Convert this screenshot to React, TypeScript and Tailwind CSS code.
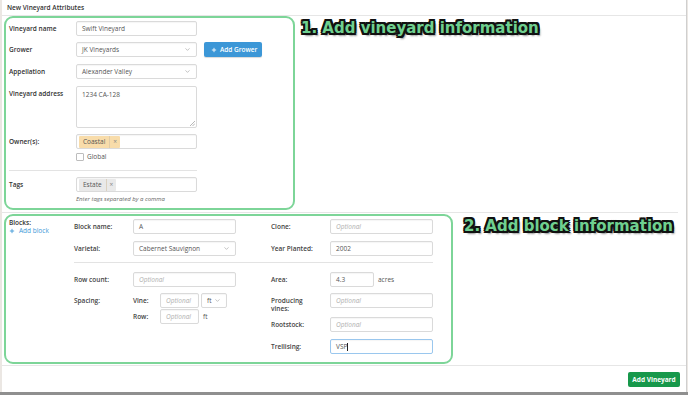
import React from 'react';
import { ChevronDown, Plus } from 'lucide-react';

function Field({ children, className = '' }: { children?: React.ReactNode; className?: string }) {
  return (
    <div
      className={`h-[15px] rounded-[2px] border border-[#dadada] bg-white flex items-center text-[6.5px] text-[#555] shadow-[inset_0_1px_1px_rgba(0,0,0,0.04)] ${className}`}
    >
      {children}
    </div>
  );
}

function Select({ value, className = '' }: { value: string; className?: string }) {
  return (
    <Field className={`justify-between pl-[5px] pr-[5px] ${className}`}>
      <span>{value}</span>
      <ChevronDown size={7} strokeWidth={1.5} className="text-[#777]" />
    </Field>
  );
}

function Optional() {
  return <span className="italic text-[#b0b0b0]">Optional</span>;
}

function Tag({ text, tone }: { text: string; tone: 'orange' | 'gray' }) {
  const bg = tone === 'orange' ? 'bg-[#f8dcaa]' : 'bg-[#e9e9e9]';
  return (
    <div className={`h-[12px] ${bg} rounded-[1px] flex items-center text-[6.5px] text-[#555]`}>
      <span className="px-[4px]">{text}</span>
      <span className="h-full w-px bg-[#d2c2a5] opacity-60" />
      <span className="px-[3px] text-[#888]">×</span>
    </div>
  );
}

function Row({ label, children, className = '', top = false }: { label: string; children: React.ReactNode; className?: string; top?: boolean }) {
  return (
    <div className={`flex ${top ? 'items-start' : 'items-center'} ${className}`}>
      <div className="w-[67px] shrink-0 font-semibold text-[#333] text-[6.5px] leading-[15px]">{label}</div>
      {children}
    </div>
  );
}

function BRow({ label, children, className = '' }: { label: React.ReactNode; children: React.ReactNode; className?: string }) {
  return (
    <div className={`flex items-center ${className}`}>
      <div className="w-[59px] shrink-0 font-semibold text-[#444] text-[6.5px] leading-[15px]">{label}</div>
      {children}
    </div>
  );
}

// thick black outline round the green annotation text
const outline =
  '[text-shadow:-1.8px_-1.8px_0_#111,1.8px_-1.8px_0_#111,-1.8px_1.8px_0_#111,1.8px_1.8px_0_#111,0_-2px_0_#111,0_2px_0_#111,-2px_0_0_#111,2px_0_0_#111,2.5px_2.5px_2px_rgba(0,0,0,0.45)]';

export default function App() {
  return (
    <div className="w-[688px] h-[395px] bg-[#ebe7e3] flex flex-col overflow-hidden font-['Open_Sans',sans-serif]">
      <div className="ml-[2px] w-[685px] h-[392px] bg-white border-r border-[#cfcfcf] flex flex-col">
        {/* header */}
        <div className="h-[16px] border-b border-[#e6e6e6] pl-[5px] flex items-center text-[6.5px] font-semibold text-[#333]">
          New Vineyard Attributes
        </div>

        {/* vineyard section */}
        <div className="flex pl-[2px]">
          <div className="w-[291px] h-[194px] shrink-0 rounded-[9px] border-2 border-[#7dd598] pl-[3px] pt-[3px] flex flex-col">
            <Row label="Vineyard name">
              <Field className="w-[121px] px-[5px]">Swift Vineyard</Field>
            </Row>
            <Row label="Grower" className="mt-[6px]">
              <Select value="JK Vineyards" className="w-[121px]" />
              <button className="ml-[7px] h-[15px] w-[58px] rounded-[2px] bg-[#3c97d7] text-white text-[6.5px] font-semibold flex items-center pl-[7px] gap-[3px] shadow-[0_1px_1px_rgba(0,0,0,0.15)]">
                <Plus size={6} strokeWidth={3.5} />
                Add Grower
              </button>
            </Row>
            <Row label="Appellation" className="mt-[7px]">
              <Select value="Alexander Valley" className="w-[121px]" />
            </Row>
            <Row label="Vineyard address" className="mt-[7px]" top>
              <div className="relative w-[121px] h-[42px] rounded-[2px] border border-[#dadada] px-[5px] pt-[3px] text-[6.5px] text-[#555]">
                1234 CA-128
                <svg className="absolute right-[1px] bottom-[1px]" width="5" height="5" viewBox="0 0 5 5">
                  <path d="M5 0 L0 5 M5 2.5 L2.5 5" stroke="#999" strokeWidth="0.7" />
                </svg>
              </div>
            </Row>
            <Row label="Owner(s):" className="mt-[6px]">
              <Field className="w-[121px] px-[2px]">
                <Tag text="Coastal" tone="orange" />
              </Field>
            </Row>
            <div className="mt-[4px] ml-[67px] flex items-center gap-[3px] text-[6.5px] text-[#555]">
              <span className="w-[8px] h-[8px] rounded-[1px] border border-[#bdbdbd] bg-white" />
              <span className="leading-[8px]">Global</span>
            </div>
            <div className="mt-[9px] w-[188px] h-px bg-[#e3e3e3]" />
            <Row label="Tags" className="mt-[6px]">
              <Field className="w-[121px] px-[2px]">
                <Tag text="Estate" tone="gray" />
              </Field>
            </Row>
            <div className="mt-[3px] ml-[67px] italic text-[6px] leading-[9px] text-[#666]">
              Enter tags separated by a comma
            </div>
          </div>
          <div className={`ml-[6px] mt-[3px] font-['DejaVu_Sans',sans-serif] font-bold text-[15px] leading-[18px] text-[#6fd08f] ${outline}`}>
            1. Add vineyard information
          </div>
        </div>

        <div className="mt-[2px] mr-[8px] h-px bg-[#e6e6e6]" />

        {/* block section */}
        <div className="flex pl-[2px] mt-[1px]">
          <div className="w-[449px] h-[150px] shrink-0 rounded-[9px] border-2 border-[#7dd598] pl-[3px] pt-[3px] flex">
            <div className="w-[65px] shrink-0 text-[6.5px] leading-[8px]">
              <div className="font-semibold text-[#333]">Blocks:</div>
              <div className="flex items-center gap-[4px] text-[#3c97d7]">
                <Plus size={6} strokeWidth={3.5} />
                Add block
              </div>
            </div>
            <div className="flex flex-col">
              <div className="flex gap-[35px]">
                <div className="w-[162px] flex flex-col gap-[7px]">
                  <BRow label="Block name:">
                    <Field className="w-[103px] px-[5px]">A</Field>
                  </BRow>
                  <BRow label="Varietal:">
                    <Select value="Cabernet Sauvignon" className="w-[103px]" />
                  </BRow>
                </div>
                <div className="w-[162px] flex flex-col gap-[7px]">
                  <BRow label="Clone:">
                    <Field className="w-[103px] px-[5px]"><Optional /></Field>
                  </BRow>
                  <BRow label="Year Planted:">
                    <Field className="w-[103px] px-[5px]">2002</Field>
                  </BRow>
                </div>
              </div>
              <div className="mt-[6px] w-[359px] h-px bg-[#e3e3e3]" />
              <div className="mt-[9px] flex gap-[35px]">
                <div className="w-[162px] flex flex-col">
                  <BRow label="Row count:">
                    <Field className="w-[103px] px-[5px]"><Optional /></Field>
                  </BRow>
                  <div className="mt-[6px] flex items-start">
                    <div className="w-[59px] shrink-0 font-semibold text-[#444] text-[6.5px] leading-[15px]">Spacing:</div>
                    <div className="flex flex-col gap-[1px]">
                      <div className="flex items-center">
                        <div className="w-[27px] font-semibold text-[#444] text-[6.5px]">Vine:</div>
                        <Field className="w-[39px] px-[5px]"><Optional /></Field>
                        <Select value="ft" className="ml-[2px] w-[26px]" />
                      </div>
                      <div className="flex items-center">
                        <div className="w-[27px] font-semibold text-[#444] text-[6.5px]">Row:</div>
                        <Field className="w-[39px] px-[5px]"><Optional /></Field>
                        <span className="ml-[4px] text-[6.5px] text-[#555]">ft</span>
                      </div>
                    </div>
                  </div>
                </div>
                <div className="w-[162px] flex flex-col">
                  <BRow label="Area:">
                    <Field className="w-[44px] px-[5px]">4.3</Field>
                    <span className="ml-[4px] text-[6.5px] text-[#555]">acres</span>
                  </BRow>
                  <div className="mt-[6px] flex items-start">
                    <div className="w-[59px] shrink-0 pt-[4px] font-semibold text-[#444] text-[6.5px] leading-[8px]">
                      Producing
                      <br />
                      vines:
                    </div>
                    <Field className="w-[103px] px-[5px]"><Optional /></Field>
                  </div>
                  <BRow label="Rootstock:" className="mt-[4px]">
                    <Field className="w-[103px] px-[5px]"><Optional /></Field>
                  </BRow>
                  <BRow label="Trellising:" className="mt-[7px]">
                    <Field className="w-[103px] px-[5px] !border-[#9ac7ee] shadow-[0_0_2px_rgba(102,175,233,0.5)]">
                      <span>VSP</span>
                      <span className="w-px h-[8px] bg-[#222]" />
                    </Field>
                  </BRow>
                </div>
              </div>
            </div>
          </div>
          <div className={`ml-[11px] mt-[3px] font-['DejaVu_Sans',sans-serif] font-bold text-[15px] leading-[18px] text-[#6fd08f] ${outline}`}>
            2. Add block information
          </div>
        </div>

        {/* footer */}
        <div className="mt-[1px] h-px bg-[#e6e6e6]" />
        <div className="flex justify-end pr-[6px] mt-[6px]">
          <button className="h-[15px] w-[52px] rounded-[2px] bg-[#17984b] text-white text-[6.5px] font-bold">
            Add Vineyard
          </button>
        </div>
      </div>
      <div className="h-[3px] bg-[#8f8f8f]" />
    </div>
  );
}
